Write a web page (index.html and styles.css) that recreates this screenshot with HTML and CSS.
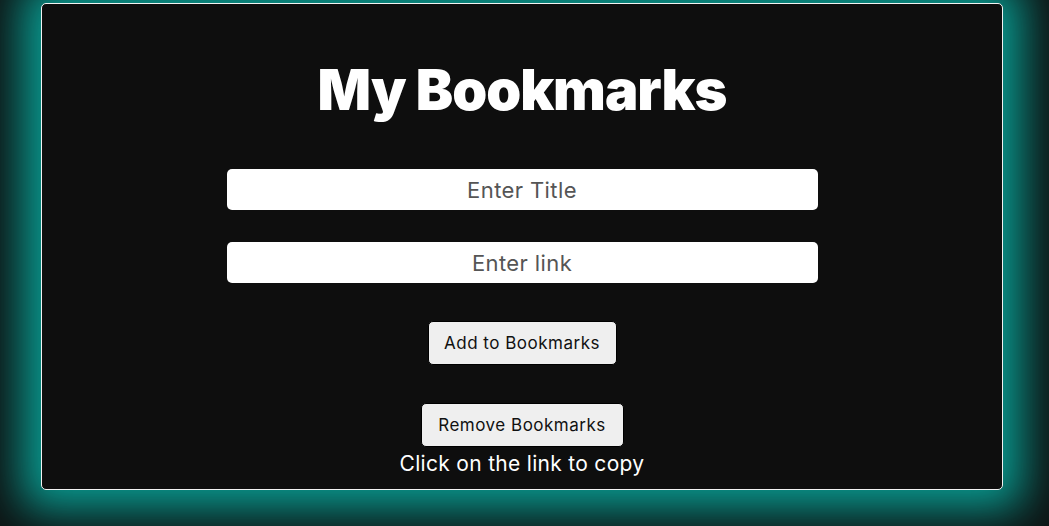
FILE: index.html
```html
<!DOCTYPE html>
<html lang="en">
<head>
<meta charset="utf-8">
<title>My Bookmarks</title>
<link rel="stylesheet" href="styles.css">
</head>
<body>
  <main class="card">
    <h1 class="title">My Bookmarks</h1>
    <form class="form">
      <input class="field" type="text" placeholder="Enter Title">
      <input class="field" type="text" placeholder="Enter link">
    </form>
    <button class="btn btn-add" type="button">Add to Bookmarks</button>
    <button class="btn btn-remove" type="button">Remove Bookmarks</button>
    <p class="hint">Click on the link to copy</p>
  </main>
</body>
</html>
```
FILE: styles.css
```css
html, body {
  margin: 0;
  height: 100%;
}
body {
  background: #0e1414;
  font-family: "Inter", "Open Sans", sans-serif;
  overflow: hidden;
  padding-top: 3px;
  padding-left: 41px;
  box-sizing: border-box;
}
.card {
  width: 962px;
  height: 487px;
  box-sizing: border-box;
  border: 1px solid #f2f2f2;
  border-radius: 5px;
  background: #0e0e0e;
  box-shadow: 0 0 44px 20px #099a90;
  display: flex;
  flex-direction: column;
  align-items: center;
}
.title {
  margin: 58px 0 0;
  font-size: 56px;
  line-height: 1;
  font-weight: 900;
  color: #ffffff;
  letter-spacing: -1px;
}
.form {
  margin-top: 51px;
  display: flex;
  flex-direction: column;
  gap: 32px;
}
.field {
  width: 591px;
  height: 41px;
  box-sizing: border-box;
  border: none;
  border-radius: 5px;
  background: #ffffff;
  text-align: center;
  font-family: inherit;
  font-size: 22px;
  letter-spacing: 0.4px;
  color: #222;
  outline: none;
}
.field::placeholder {
  color: #555555;
}
.btn {
  height: 44px;
  box-sizing: border-box;
  border: 1px solid #000;
  border-radius: 5px;
  background: #efefef;
  color: #111;
  font-family: inherit;
  font-size: 17px;
  letter-spacing: 0.5px;
  padding: 0 10px;
}
.btn-add {
  margin-top: 38px;
  width: 189px;
}
.btn-remove {
  margin-top: 38px;
  width: 203px;
}
.hint {
  margin: 4px 0 0;
  color: #ffffff;
  font-size: 21px;
  letter-spacing: 0.3px;
  line-height: 26px;
}
```
